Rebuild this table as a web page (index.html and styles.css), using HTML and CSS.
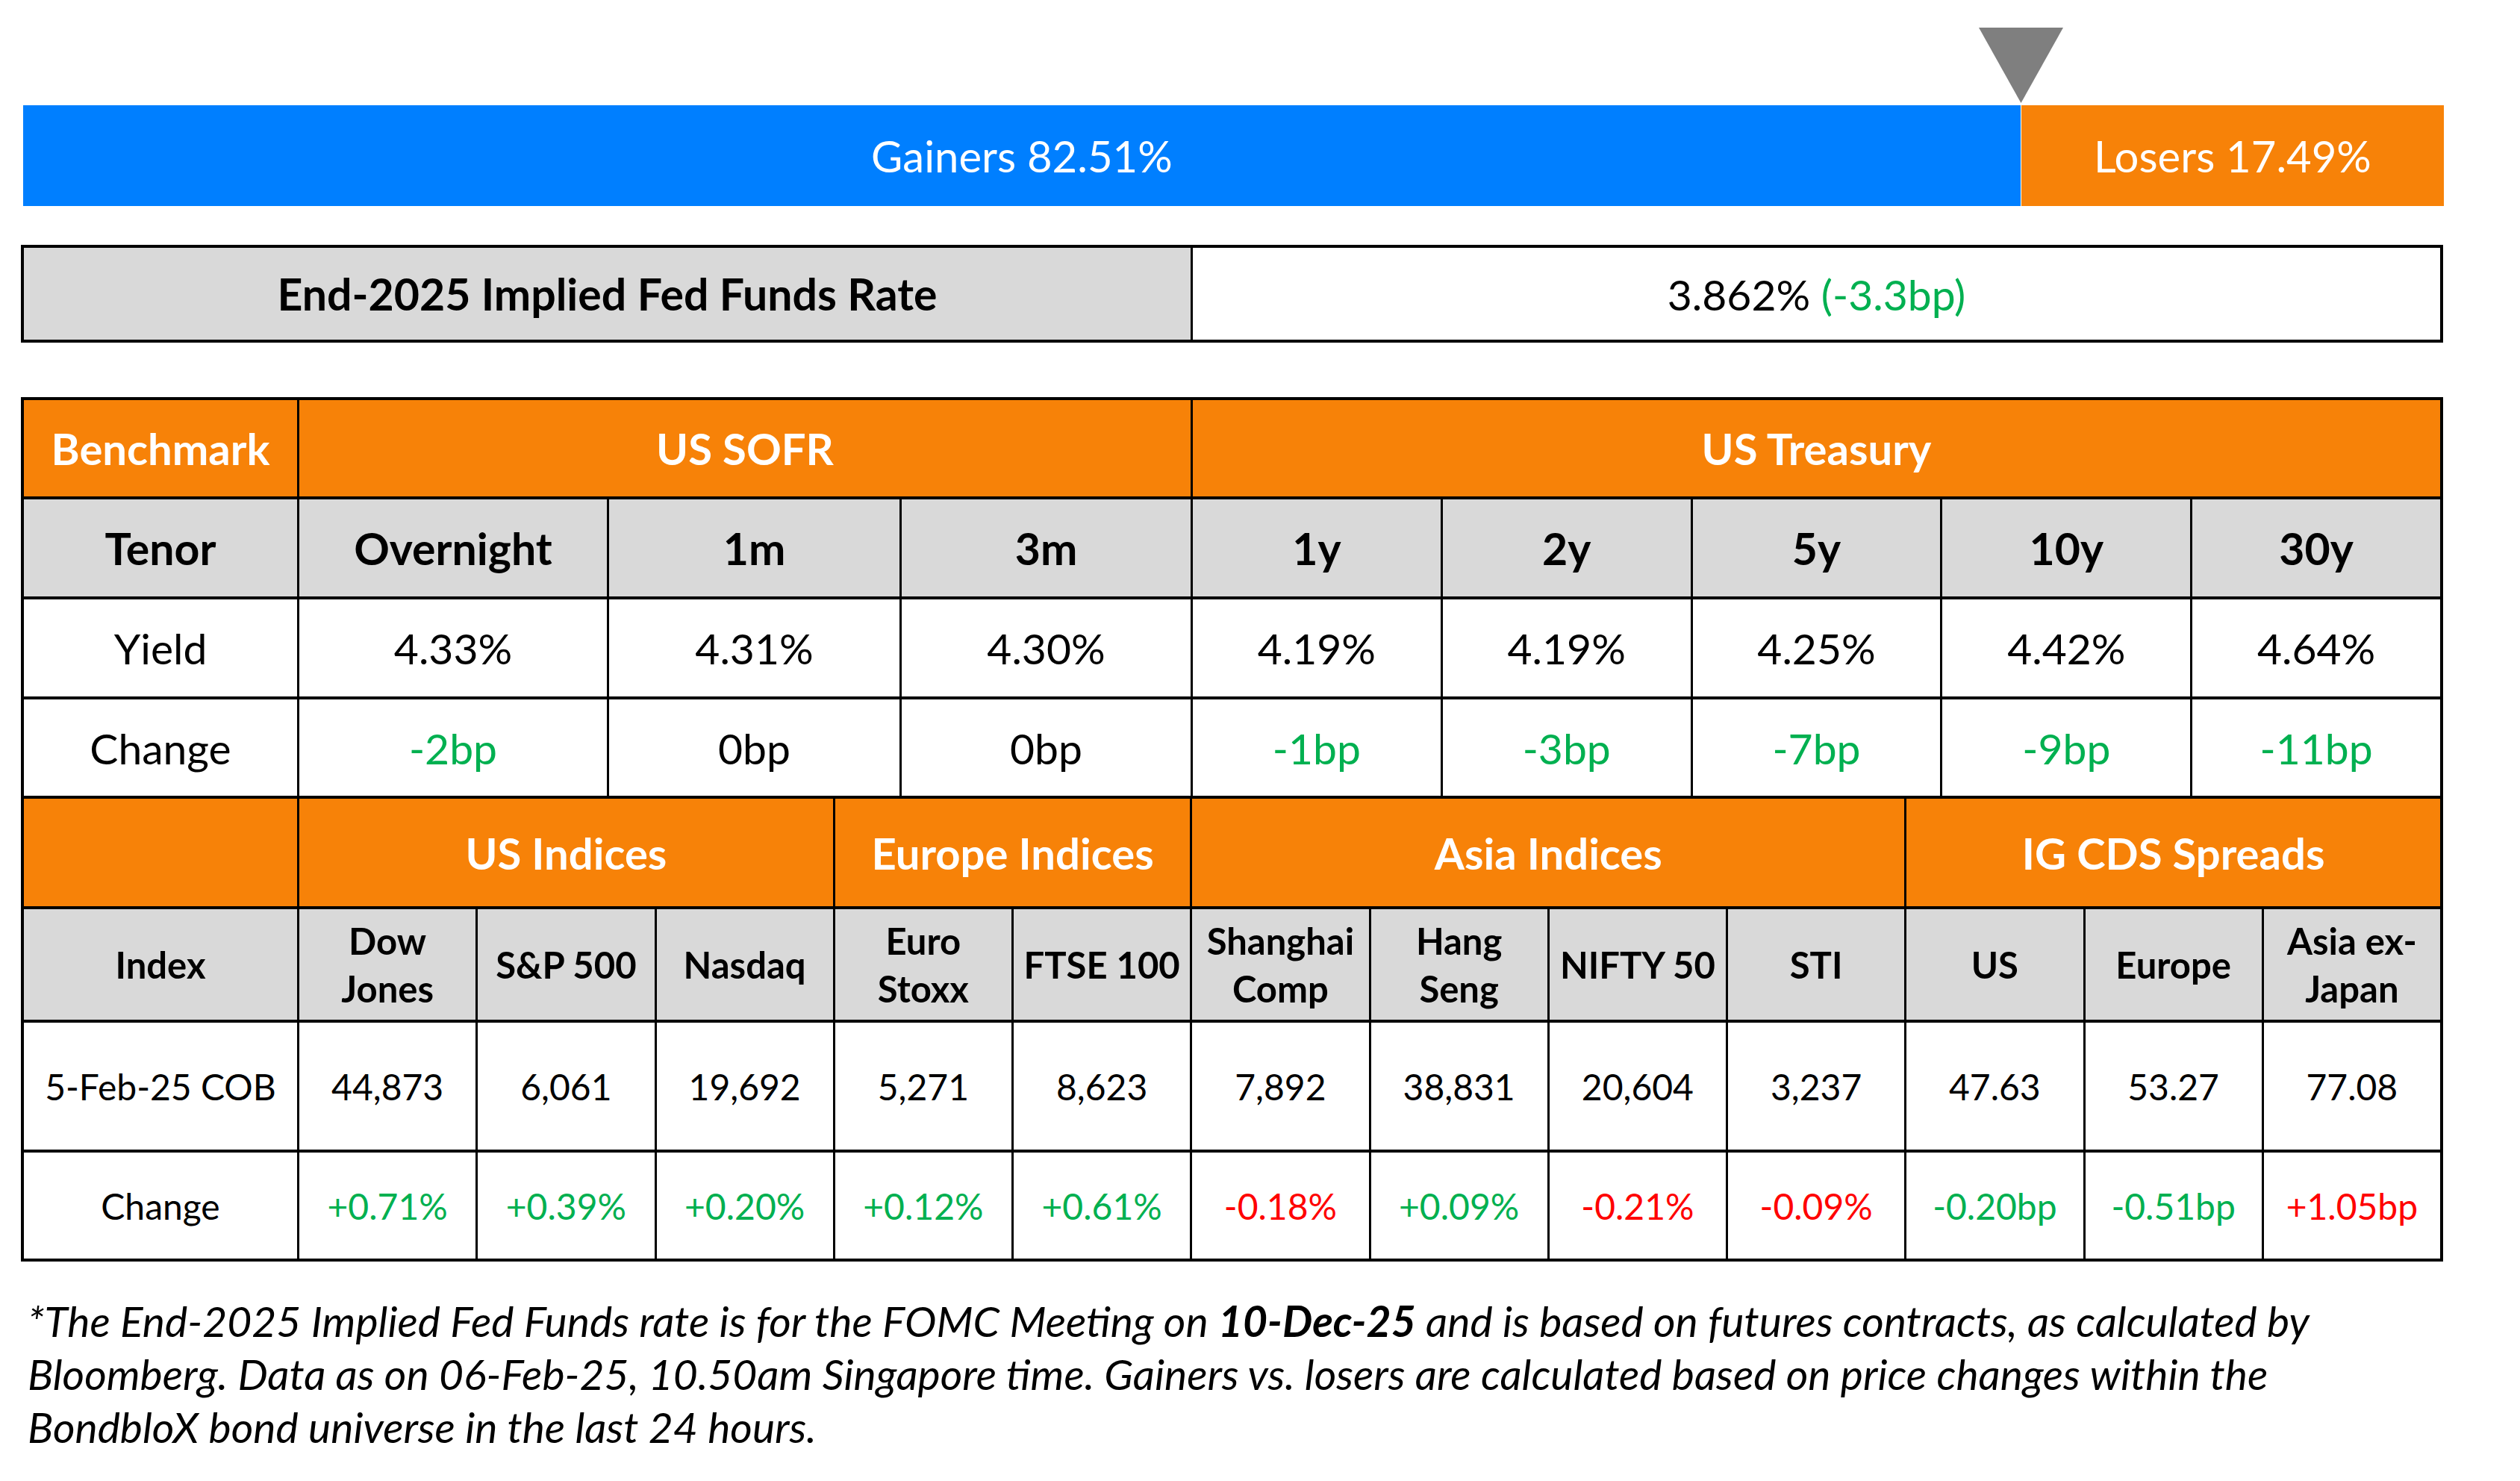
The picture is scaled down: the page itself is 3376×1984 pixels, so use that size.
FILE: index.html
```html
<!DOCTYPE html>
<html lang="en">
<head>
<meta charset="utf-8">
<title>Market Snapshot</title>
<link rel="stylesheet" href="styles.css">
</head>
<body>
<div class="page">
  <div class="marker-row">
    <svg class="marker" style="margin-left:calc(82.51% - 56px)" width="113" height="101" viewBox="0 0 113 101"><polygon points="0,0 113,0 56.5,101" fill="#7f7f7f"/></svg>
  </div>
  <div class="bar">
    <div class="seg gainers" style="width:82.51%">Gainers 82.51%</div>
    <div class="seg losers">Losers 17.49%</div>
  </div>

  <div class="fed">
    <div class="fed-label">End-2025 Implied Fed Funds Rate</div>
    <div class="fed-value">3.862% <span class="pos">(-3.3bp)</span></div>
  </div>

  <div class="table">
    <div class="grid grid-a">
      <div class="c hd">Benchmark</div>
      <div class="c hd span3">US SOFR</div>
      <div class="c hd span5">US Treasury</div>

      <div class="c lbl">Tenor</div>
      <div class="c lbl">Overnight</div>
      <div class="c lbl">1m</div>
      <div class="c lbl">3m</div>
      <div class="c lbl">1y</div>
      <div class="c lbl">2y</div>
      <div class="c lbl">5y</div>
      <div class="c lbl">10y</div>
      <div class="c lbl">30y</div>

      <div class="c val">Yield</div>
      <div class="c val">4.33%</div>
      <div class="c val">4.31%</div>
      <div class="c val">4.30%</div>
      <div class="c val">4.19%</div>
      <div class="c val">4.19%</div>
      <div class="c val">4.25%</div>
      <div class="c val">4.42%</div>
      <div class="c val">4.64%</div>

      <div class="c val">Change</div>
      <div class="c val pos">-2bp</div>
      <div class="c val">0bp</div>
      <div class="c val">0bp</div>
      <div class="c val pos">-1bp</div>
      <div class="c val pos">-3bp</div>
      <div class="c val pos">-7bp</div>
      <div class="c val pos">-9bp</div>
      <div class="c val pos">-11bp</div>
    </div>

    <div class="grid grid-b">
      <div class="c hd"></div>
      <div class="c hd span3">US Indices</div>
      <div class="c hd span2">Europe Indices</div>
      <div class="c hd span4">Asia Indices</div>
      <div class="c hd span3">IG CDS Spreads</div>

      <div class="c lbl">Index</div>
      <div class="c lbl">Dow<br>Jones</div>
      <div class="c lbl">S&amp;P 500</div>
      <div class="c lbl">Nasdaq</div>
      <div class="c lbl">Euro<br>Stoxx</div>
      <div class="c lbl">FTSE 100</div>
      <div class="c lbl">Shanghai<br>Comp</div>
      <div class="c lbl">Hang<br>Seng</div>
      <div class="c lbl">NIFTY 50</div>
      <div class="c lbl">STI</div>
      <div class="c lbl">US</div>
      <div class="c lbl">Europe</div>
      <div class="c lbl">Asia ex-<br>Japan</div>

      <div class="c val">5-Feb-25 COB</div>
      <div class="c val">44,873</div>
      <div class="c val">6,061</div>
      <div class="c val">19,692</div>
      <div class="c val">5,271</div>
      <div class="c val">8,623</div>
      <div class="c val">7,892</div>
      <div class="c val">38,831</div>
      <div class="c val">20,604</div>
      <div class="c val">3,237</div>
      <div class="c val">47.63</div>
      <div class="c val">53.27</div>
      <div class="c val">77.08</div>

      <div class="c val">Change</div>
      <div class="c val pos">+0.71%</div>
      <div class="c val pos">+0.39%</div>
      <div class="c val pos">+0.20%</div>
      <div class="c val pos">+0.12%</div>
      <div class="c val pos">+0.61%</div>
      <div class="c val neg">-0.18%</div>
      <div class="c val pos">+0.09%</div>
      <div class="c val neg">-0.21%</div>
      <div class="c val neg">-0.09%</div>
      <div class="c val pos">-0.20bp</div>
      <div class="c val pos">-0.51bp</div>
      <div class="c val neg">+1.05bp</div>
    </div>
  </div>

  <p class="note">*The End-2025 Implied Fed Funds rate is for the FOMC Meeting on <b>10-Dec-25</b> and is based on futures contracts, as calculated by<br>Bloomberg. Data as on 06-Feb-25, 10.50am Singapore time. Gainers vs. losers are calculated based on price changes within the<br>BondbloX bond universe in the last 24 hours.</p>
</div>
</body>
</html>
```

FILE: styles.css
```css
* { box-sizing: border-box; }

html, body {
  margin: 0;
  padding: 0;
  background: #ffffff;
}

body {
  font-family: Lato, "Open Sans", "Liberation Sans", sans-serif;
  color: #000000;
}

.page {
  width: 3376px;
  padding: 37px 0 0 28px;
}

.marker-row {
  width: 3243px;
  margin-left: 3px;
  height: 104px;
  display: flex;
  align-items: flex-start;
}

.marker {
  display: block;
  flex: none;
}

.bar {
  width: 3243px;
  margin-left: 3px;
  height: 135px;
  display: flex;
  gap: 1px;
  background: #ffffff;
}

.seg {
  display: flex;
  align-items: center;
  justify-content: center;
  color: #ffffff;
  font-size: 58px;
}

.gainers {
  flex: none;
  background: #007fff;
}

.losers {
  flex: 1;
  background: #f78208;
}

.fed {
  margin-top: 52px;
  width: 3245px;
  height: 131px;
  border: 4px solid #000000;
  background: #000000;
  display: grid;
  grid-template-columns: 1563px 1fr;
  column-gap: 3px;
}

.fed-label,
.fed-value {
  display: flex;
  align-items: center;
  justify-content: center;
  font-size: 57px;
}

.fed-label {
  background: #d9d9d9;
  font-weight: 700;
  font-size: 59px;
}

.fed-value {
  background: #ffffff;
  white-space: pre;
}

.table {
  margin-top: 73px;
  width: 3245px;
  padding: 4px;
  background: #000000;
  display: flex;
  flex-direction: column;
  gap: 4px;
}

.grid {
  display: grid;
  column-gap: 3px;
  row-gap: 4px;
  background: #000000;
}

.grid-a {
  grid-template-columns: 366px 412px 389px 387px repeat(5, 1fr);
  grid-template-rows: 129px 130px 130px 129px;
}

.grid-b {
  grid-template-columns: 366px repeat(12, 1fr);
  grid-template-rows: 144px 148px 170px 142px;
}

.c {
  display: flex;
  align-items: center;
  justify-content: center;
  text-align: center;
  background: #ffffff;
  font-size: 57px;
}

.span2 { grid-column: span 2; }
.span3 { grid-column: span 3; }
.span4 { grid-column: span 4; }
.span5 { grid-column: span 5; }

.hd {
  background: #f78208;
  color: #ffffff;
  font-weight: 700;
  font-size: 58px;
}

.lbl {
  background: #d9d9d9;
  font-weight: 700;
  font-size: 59px;
}

.grid-b .lbl {
  font-size: 49px;
  line-height: 64px;
}

.grid-b .val {
  font-size: 48px;
}

.pos { color: #00b050; }
.neg { color: #ff0000; }

.note {
  margin: 44px 0 0 9px;
  font-size: 57px;
  line-height: 71px;
  font-style: italic;
}
```
